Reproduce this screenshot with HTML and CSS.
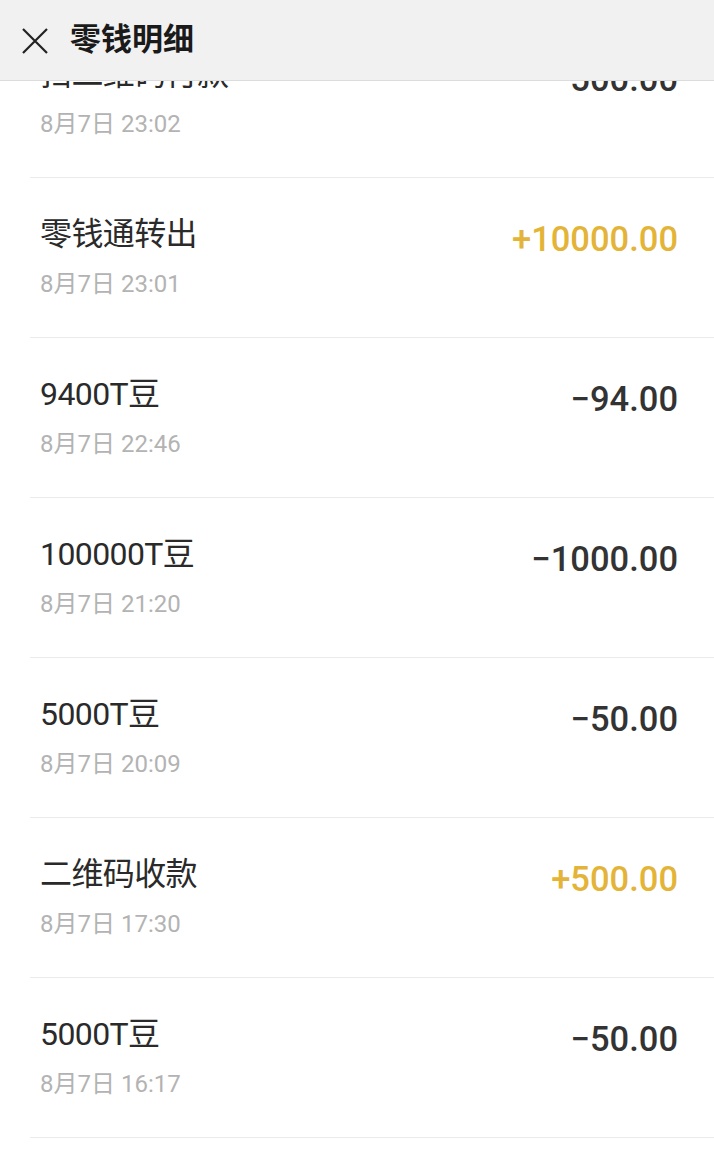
FILE: index.html
```html
<!DOCTYPE html>
<html>

<head>
  <meta charset="utf-8">
  <title>零钱明细</title>
  <link rel="stylesheet" href="styles.css">
</head>

<body>
  <header class="topbar">
    <svg class="close-icon" width="26" height="26" viewBox="0 0 26 26">
      <path d="M1 1 L25 25 M25 1 L1 25" stroke="#222" stroke-width="2.2" fill="none" />
    </svg>
    <h1 class="title">零钱明细</h1>
  </header>

  <ul class="bill-list">
    <li class="bill">
      <div class="bill-info">
        <div class="bill-name">扫二维码付款</div>
        <div class="bill-time">8月7日 23:02</div>
      </div>
      <div class="bill-amount">−500.00</div>
    </li>
    <li class="bill">
      <div class="bill-info">
        <div class="bill-name">零钱通转出</div>
        <div class="bill-time">8月7日 23:01</div>
      </div>
      <div class="bill-amount income">+10000.00</div>
    </li>
    <li class="bill">
      <div class="bill-info">
        <div class="bill-name">9400T豆</div>
        <div class="bill-time">8月7日 22:46</div>
      </div>
      <div class="bill-amount">−94.00</div>
    </li>
    <li class="bill">
      <div class="bill-info">
        <div class="bill-name">100000T豆</div>
        <div class="bill-time">8月7日 21:20</div>
      </div>
      <div class="bill-amount">−1000.00</div>
    </li>
    <li class="bill">
      <div class="bill-info">
        <div class="bill-name">5000T豆</div>
        <div class="bill-time">8月7日 20:09</div>
      </div>
      <div class="bill-amount">−50.00</div>
    </li>
    <li class="bill">
      <div class="bill-info">
        <div class="bill-name">二维码收款</div>
        <div class="bill-time">8月7日 17:30</div>
      </div>
      <div class="bill-amount income">+500.00</div>
    </li>
    <li class="bill">
      <div class="bill-info">
        <div class="bill-name">5000T豆</div>
        <div class="bill-time">8月7日 16:17</div>
      </div>
      <div class="bill-amount">−50.00</div>
    </li>
  </ul>
</body>

</html>
```

FILE: styles.css
```css
body {
  margin: 0;
  padding: 0;
  background-color: #fff;
  font-family: Roboto, "Noto Sans CJK SC", sans-serif;
  color: #333;
  overflow: hidden;
}

.topbar {
  position: fixed;
  top: 0;
  left: 0;
  right: 0;
  z-index: 2;
  height: 81px;
  box-sizing: border-box;
  display: flex;
  align-items: center;
  padding-left: 22px;
  background-color: #f1f1f1;
  border-bottom: 1px solid #dcdcdc;
}

.close-icon {
  display: block;
  margin-top: 1px;
}

.title {
  margin: 0 0 0 22px;
  font-size: 31px;
  font-weight: bold;
  color: #1a1a1a;
  line-height: 40px;
}

.bill-list {
  list-style-type: none;
  margin: 0 0 0 30px;
  padding: 18px 0 0 0;
}

.bill {
  display: flex;
  justify-content: space-between;
  align-items: flex-start;
  height: 159px;
  padding: 0 36px 0 10px;
  border-bottom: 1px solid #ebebeb;
}

.bill-info {
  padding-top: 36px;
}

.bill-name {
  font-size: 32px;
  line-height: 40px;
  letter-spacing: -0.6px;
  color: #2a2a2a;
}

.bill-time {
  margin-top: 14px;
  font-size: 24px;
  line-height: 32px;
  color: #b3b3b3;
}

.bill-amount {
  margin-top: 41px;
  font-size: 34.5px;
  line-height: 40px;
  font-weight: 500;
  color: #333;
}

.bill-amount.income {
  color: #e3b437;
}
```
